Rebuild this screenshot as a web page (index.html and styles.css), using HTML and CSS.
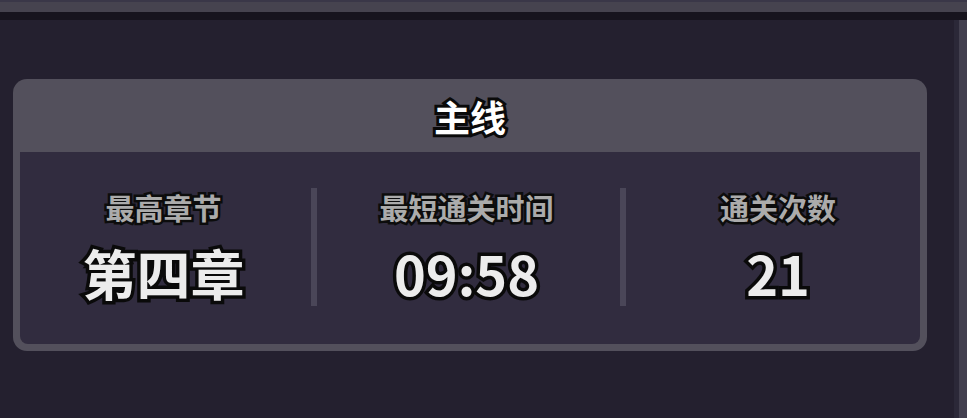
FILE: index.html
```html
<!DOCTYPE html>
<html lang="zh-CN">
<head>
<meta charset="utf-8">
<title>主线</title>
<link rel="stylesheet" href="styles.css">
</head>
<body>
<div class="topbar"><div class="topbar-light"></div><div class="topbar-dark"></div></div>
<div class="page">
  <main class="content">
    <section class="card">
      <header class="card-head"><h2 class="card-title">主线</h2></header>
      <div class="card-body">
        <div class="stat stat-first">
          <div class="stat-label">最高章节</div>
          <div class="stat-value">第四章</div>
        </div>
        <div class="divider"></div>
        <div class="stat stat-mid">
          <div class="stat-label">最短通关时间</div>
          <div class="stat-value">09:58</div>
        </div>
        <div class="divider"></div>
        <div class="stat stat-last">
          <div class="stat-label">通关次数</div>
          <div class="stat-value">21</div>
        </div>
      </div>
    </section>
  </main>
  <div class="scrollbar"><div class="track-dark"></div><div class="track-light"></div></div>
</div>
</body>
</html>
```
FILE: styles.css
```css
html, body {
  margin: 0;
  padding: 0;
  height: 100%;
}
body {
  background: #24202f;
  font-family: "Noto Sans CJK SC", "Noto Sans", sans-serif;
  overflow: hidden;
}
.topbar {
  display: flex;
  flex-direction: column;
}
.topbar-light {
  height: 10px;
  background: #46434f;
  border-top: 2px solid #3a3748;
}
.topbar-dark {
  height: 8px;
  background: #17141e;
}
.page {
  display: flex;
  height: 398px;
}
.content {
  flex: 1;
  padding: 59px 0 0 13px;
}
.scrollbar {
  display: flex;
  width: 13px;
}
.track-dark {
  width: 5px;
  background: #2b2838;
}
.track-light {
  flex: 1;
  background: #43404f;
}
.card {
  width: 900px;
  background: #53505c;
  border-radius: 14px;
  padding: 0 7px 7px 7px;
}
.card-head {
  height: 73px;
  display: flex;
  align-items: center;
  justify-content: center;
}
.card-title {
  margin: 0;
  font-size: 36px;
  font-weight: 700;
  color: #ffffff;
  -webkit-text-stroke: 6px #0a0a0a;
  paint-order: stroke fill;
  line-height: 1;
  padding-top: 1px;
}
.card-body {
  background: #312c3f;
  border-radius: 0 0 8px 8px;
  height: 192px;
  box-sizing: border-box;
  padding-top: 36px;
  display: flex;
  align-items: flex-start;
}
.stat {
  display: flex;
  flex-direction: column;
  align-items: center;
}
.stat-first { width: 287px; }
.stat-mid { width: 307px; }
.stat-last { flex: 1; padding-left: 10px; }
.divider {
  width: 6px;
  height: 118px;
  background: #4a4658;
}
.stat-first + .divider { margin-left: 4px; margin-right: -4px; }
.stat-label {
  margin-top: 3px;
  font-size: 29px;
  font-weight: 700;
  line-height: 32px;
  color: #ababab;
  -webkit-text-stroke: 5px #0c0c0c;
  paint-order: stroke fill;
}
.stat-value {
  margin-top: 21px;
  font-size: 54px;
  font-weight: 700;
  line-height: 58px;
  color: #ececec;
  -webkit-text-stroke: 7px #0a0a0a;
  paint-order: stroke fill;
}
```
